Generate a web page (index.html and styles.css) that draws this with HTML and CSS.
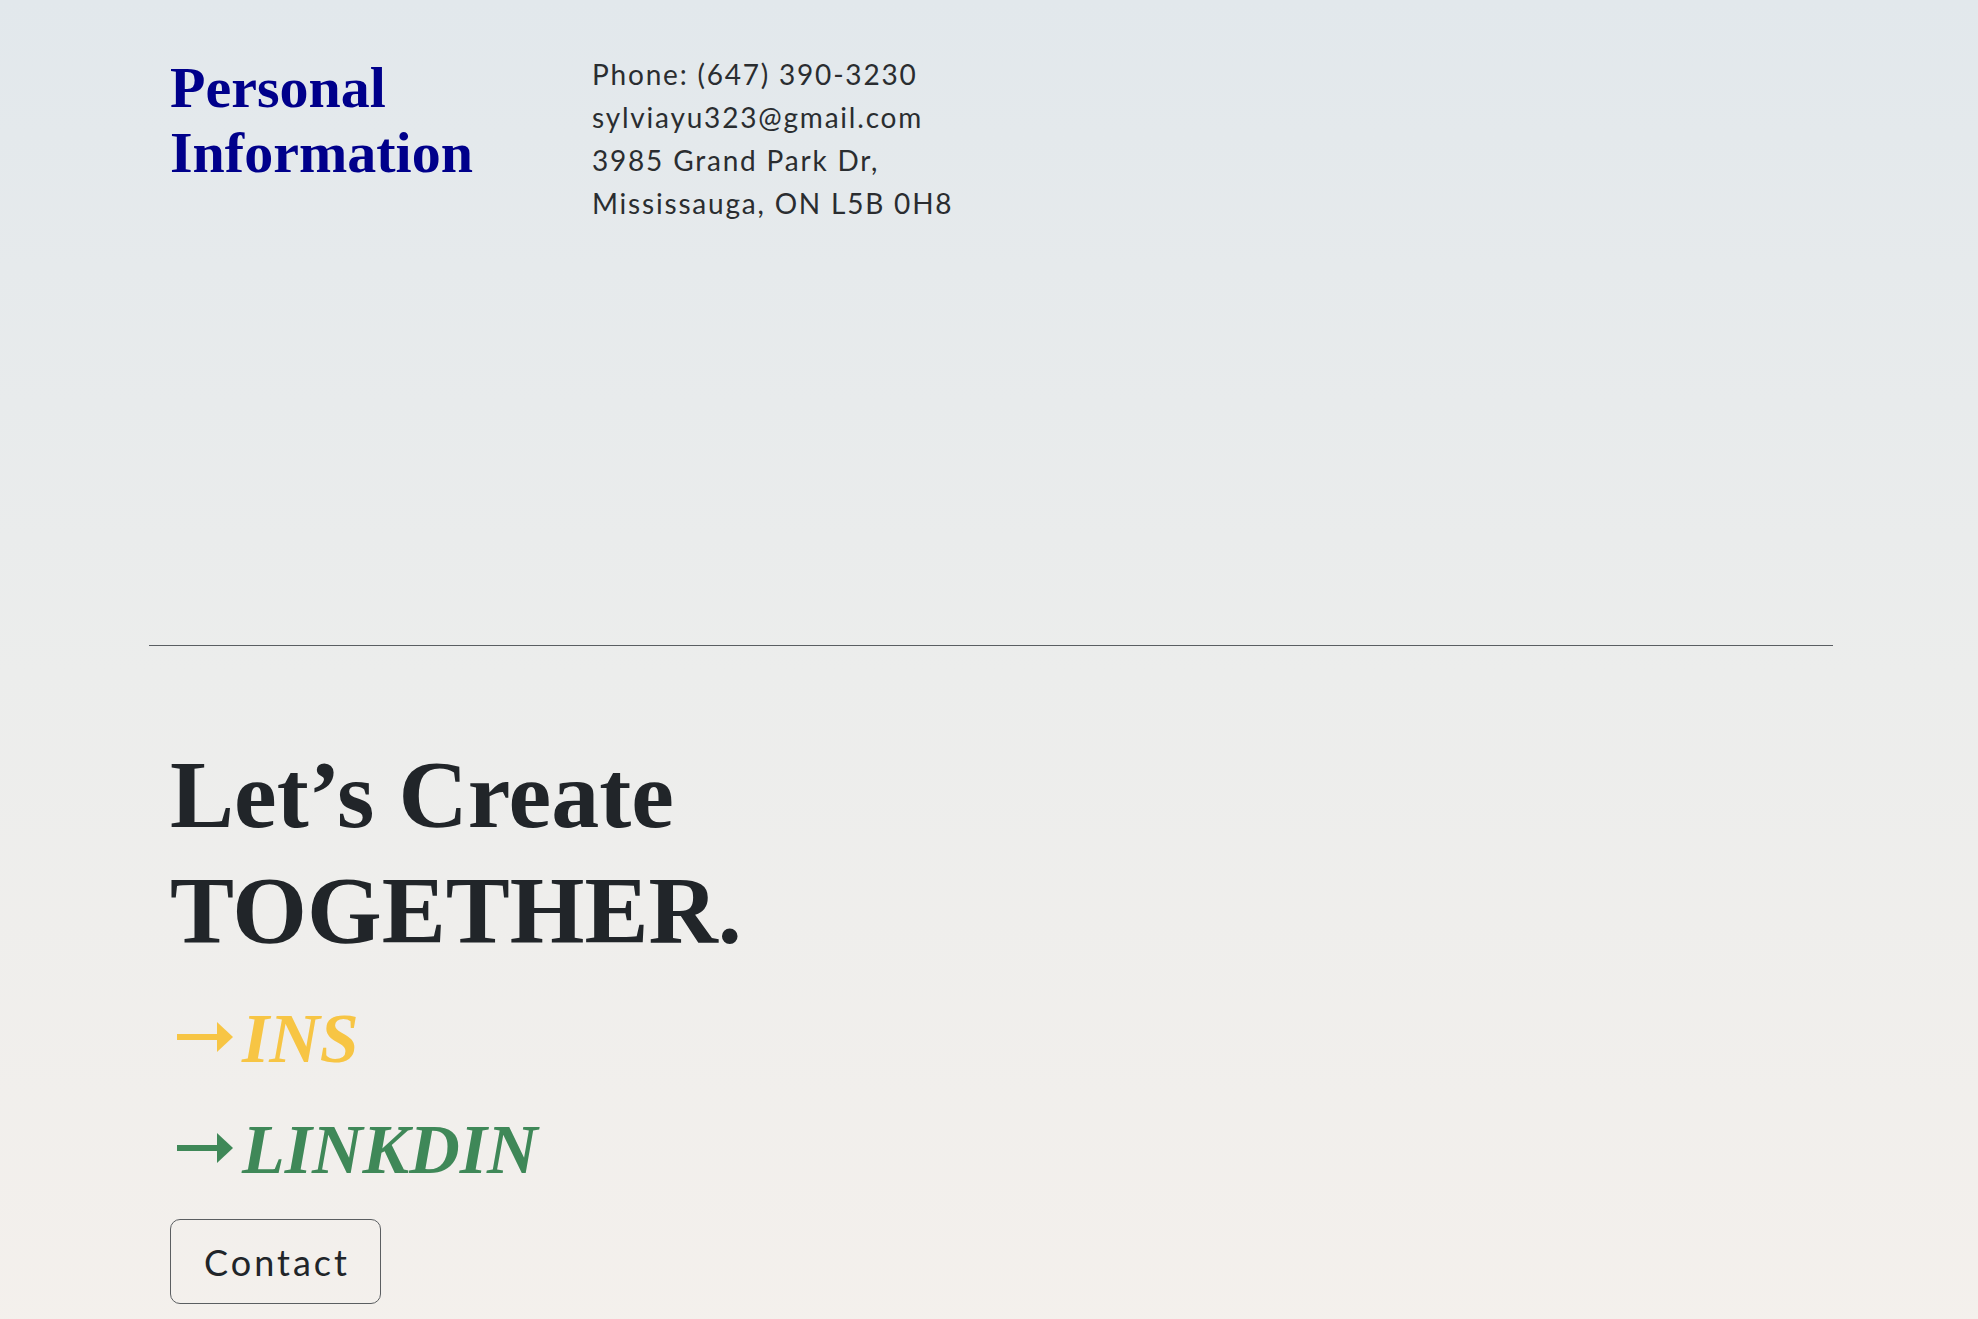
FILE: index.html
```html
<!DOCTYPE html>
<html lang="en">
<head>
<meta charset="utf-8">
<title>Contact</title>
<link rel="stylesheet" href="styles.css">
</head>
<body>
<main class="page">
  <section class="info">
    <h2 class="info-title">Personal<br>Information</h2>
    <div class="info-text">
      <p>Phone: (647) 390-3230</p>
      <p>sylviayu323@gmail.com</p>
      <p>3985 Grand Park Dr,</p>
      <p>Mississauga, ON L5B 0H8</p>
    </div>
  </section>
  <hr class="divider">
  <section class="cta">
    <h1 class="cta-title">Let’s Create<br>TOGETHER.</h1>
    <a class="link link-ins" href="#"><svg class="arrow" width="56" height="30" viewBox="0 0 56 30"><rect x="0" y="12" width="44" height="6" fill="currentColor"/><polygon points="40,0 56,15 40,30" fill="currentColor"/></svg><span class="link-text">INS</span></a>
    <a class="link link-in" href="#"><svg class="arrow" width="56" height="30" viewBox="0 0 56 30"><rect x="0" y="12" width="44" height="6" fill="currentColor"/><polygon points="40,0 56,15 40,30" fill="currentColor"/></svg><span class="link-text">LINKDIN</span></a>
    <button class="contact-btn" type="button">Contact</button>
  </section>
</main>
</body>
</html>
```

FILE: styles.css
```css
html, body {
  margin: 0;
  padding: 0;
}

body {
  min-height: 1319px;
  background: linear-gradient(180deg, #e2e8ec 0%, #ecedec 50%, #f4f0ec 100%);
  color: #212529;
  font-family: "Lato", "Liberation Sans", sans-serif;
}

.page {
  padding: 0 145px 40px 149px;
}

.info {
  display: grid;
  grid-template-columns: 422px 1fr;
  align-items: start;
  height: 645px;
  box-sizing: border-box;
  padding: 53px 0 0 21px;
}

.info-title {
  margin: 2px 0 0;
  font-family: "Liberation Serif", "Times New Roman", serif;
  font-weight: 700;
  font-size: 58px;
  line-height: 65px;
  color: #00008b;
}

.info-text p {
  margin: 0;
  font-size: 28px;
  line-height: 43px;
  letter-spacing: 1.8px;
  color: #2a2d30;
}

.divider {
  margin: 0;
  border: 0;
  border-top: 1px solid #5a5e62;
  height: 0;
}

.cta {
  padding: 91px 0 0 21px;
}

.cta-title {
  margin: 0;
  font-family: "Liberation Serif", "Times New Roman", serif;
  font-weight: 700;
  font-size: 96px;
  line-height: 116px;
  color: #212529;
}

.link {
  display: block;
  text-decoration: none;
  font-family: "Liberation Serif", "Times New Roman", serif;
  font-style: italic;
  font-weight: 700;
  font-size: 70px;
  line-height: 111px;
}

.link:first-of-type {
  margin-top: 14px;
}

.link-ins {
  color: #f7c544;
}

.link-in {
  color: #3f8858;
}

.arrow {
  vertical-align: 10px;
  margin: 0 9px 0 7px;
}

.contact-btn {
  display: block;
  margin-top: 14px;
  width: 211px;
  height: 85px;
  box-sizing: border-box;
  border: 1px solid #5b5e61;
  border-radius: 10px;
  background: transparent;
  font-family: "Lato", "Liberation Sans", sans-serif;
  font-size: 36px;
  letter-spacing: 3px;
  color: #212529;
  padding: 0 0 0 3px;
}
```
